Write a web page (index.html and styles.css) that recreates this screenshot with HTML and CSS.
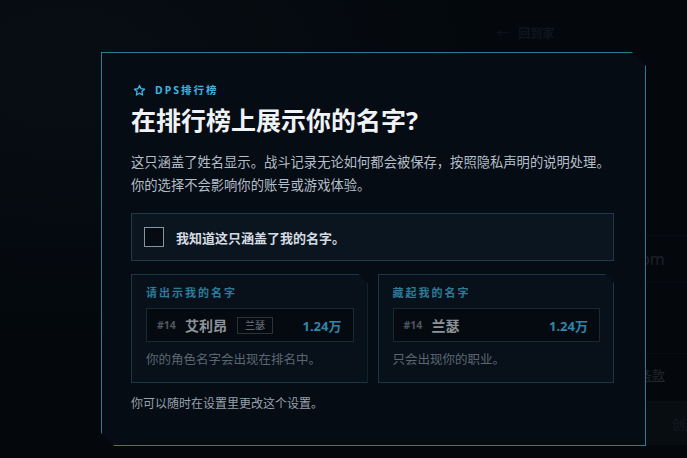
FILE: index.html
```html
<!doctype html>
<html lang="zh-CN">
<head>
    <meta charset="utf-8">
    <title>DPS排行榜</title>
    <link rel="stylesheet" href="styles.css">
</head>
<body>
    <!-- page underneath the dialog -->
    <div class="page">
        <a class="back-link" href="#"><span class="arrow">←</span> 回到家</a>
        <div class="field"><span class="field-value">player@example.com</span></div>
        <div class="rule"></div>
        <div class="terms"><span>我同意服务条款</span></div>
        <button class="create">创建</button>
    </div>

    <div class="overlay">
        <section class="dialog">
            <div class="eyebrow">
                <svg class="star" viewBox="0 0 24 24" width="13" height="13">
                    <path d="M12 2.8l2.8 6 6.5.7-4.9 4.4 1.4 6.4L12 17l-5.8 3.3 1.4-6.4-4.9-4.4 6.5-.7z" fill="none" stroke="currentColor" stroke-width="2.4" stroke-linejoin="round"/>
                </svg>
                <span>DPS排行榜</span>
            </div>
            <h1 class="title">在排行榜上展示你的名字?</h1>
            <p class="lead">这只涵盖了姓名显示。战斗记录无论如何都会被保存，按照隐私声明的说明处理。你的选择不会影响你的账号或游戏体验。</p>

            <label class="ack">
                <span class="box"></span>
                <span class="ack-text">我知道这只涵盖了我的名字。</span>
            </label>

            <div class="choices">
                <div class="choice">
                    <div class="choice-label">请出示我的名字</div>
                    <div class="preview">
                        <span class="rank">#14</span>
                        <span class="name">艾利昂</span>
                        <span class="tag">兰瑟</span>
                        <span class="dps">1.24万</span>
                    </div>
                    <p class="choice-desc">你的角色名字会出现在排名中。</p>
                </div>
                <div class="choice">
                    <div class="choice-label">藏起我的名字</div>
                    <div class="preview">
                        <span class="rank">#14</span>
                        <span class="name">兰瑟</span>
                        <span class="dps">1.24万</span>
                    </div>
                    <p class="choice-desc">只会出现你的职业。</p>
                </div>
            </div>

            <p class="footnote">你可以随时在设置里更改这个设置。</p>
        </section>
    </div>
</body>
</html>
```

FILE: styles.css
```css
:root {
    --accent: #3db5e2;
    --accent-dim: #2b7c99;
    --frame: #2b7b96;
    --cjk: "Noto Sans", "Noto Sans CJK SC", sans-serif;
}

html, body {
    margin: 0;
    height: 100%;
    overflow: hidden;
}
body {
    position: relative;
    background: radial-gradient(ellipse at 10% 15%, #0b121a 0%, #05090e 55%) #04080d;
    font-family: var(--cjk);
    color: #b4bec8;
}
p, h1 {
    margin: 0;
}

/* background page */
.page {
    display: flex;
    flex-direction: column;
    padding: 26px 0 0 497px;
    width: 400px;
}
.back-link {
    color: #171e26;
    font-size: 12px;
    font-weight: 700;
    text-decoration: none;
    line-height: 16px;
}
.back-link .arrow {
    font-weight: 400;
    margin-right: 6px;
}
.field {
    margin-top: 193px;
    height: 46px;
    border-top: 1px solid #0a1017;
    border-bottom: 1px solid #0a1017;
    display: flex;
    align-items: center;
}
.field-value {
    color: #2a3038;
    font-size: 16px;
    margin-left: 6px;
}
.rule {
    margin-top: 70px;
    height: 1px;
    background: #0b1118;
}
.terms {
    margin-top: 12px;
    font-size: 13px;
    line-height: 18px;
    color: #30363d;
    text-decoration: underline;
    padding-left: 77px;
}
.create {
    margin-top: 17px;
    width: 190px;
    height: 44px;
    border: none;
    background: #0b1117;
    color: #1f262e;
    font-family: var(--cjk);
    font-size: 13px;
    text-align: left;
    padding-left: 175px;
    white-space: nowrap;
    overflow: hidden;
}

/* dialog */
.overlay {
    position: absolute;
    inset: 0;
    background: rgba(2, 5, 9, 0.35);
}
.dialog {
    position: absolute;
    left: 101px;
    top: 52px;
    width: 545px;
    height: 394px;
    box-sizing: border-box;
    border: 1px solid var(--frame);
    background: #060c14;
    padding: 30px 31px 0 29px;
    clip-path: polygon(0 0, calc(100% - 14px) 0, 100% 14px, 100% 100%, 13px 100%, 0 calc(100% - 13px));
    display: flex;
    flex-direction: column;
}

.eyebrow {
    display: flex;
    align-items: center;
    gap: 9px;
    color: var(--accent);
    font-size: 10.5px;
    font-weight: 700;
    letter-spacing: 2px;
    line-height: 14px;
    padding-left: 2px;
}
.star {
    display: block;
}
.title {
    margin-top: 7px;
    font-size: 25px;
    font-weight: 700;
    line-height: 32px;
    color: #f0f3f5;
}
.lead {
    margin-top: 15px;
    font-size: 13.3px;
    line-height: 23px;
    color: #b4bec8;
}

.ack {
    margin-top: 16px;
    height: 48px;
    box-sizing: border-box;
    border: 1px solid #1c3a4b;
    background: #0a1520;
    display: flex;
    align-items: center;
    gap: 12px;
    padding-left: 12px;
}
.box {
    width: 20px;
    height: 20px;
    box-sizing: border-box;
    border: 1.5px solid #8795a0;
    background: #060b11;
}
.ack-text {
    font-size: 13px;
    font-weight: 700;
    color: #d5dbe0;
}

.choices {
    margin-top: 13px;
    display: grid;
    grid-template-columns: 1fr 1fr;
    gap: 10px;
}
.choice {
    border: 1px solid #18384a;
    background: #08111a;
    padding: 10px 13px 13px 14px;
    clip-path: polygon(0 0, calc(100% - 9px) 0, 100% 9px, 100% 100%, 0 100%);
}
.choice-label {
    font-size: 11px;
    font-weight: 700;
    letter-spacing: 2px;
    line-height: 16px;
    color: var(--accent-dim);
}
.preview {
    margin-top: 7px;
    height: 34px;
    box-sizing: border-box;
    border: 1px solid #1a2833;
    background: #050a10;
    display: flex;
    align-items: center;
    padding: 0 11px 0 10px;
}
.rank {
    font-size: 10.5px;
    font-weight: 700;
    color: #4d5661;
    width: 28px;
}
.name {
    font-size: 14px;
    font-weight: 700;
    color: #8d939a;
}
.tag {
    margin-left: 10px;
    font-size: 10px;
    line-height: 15px;
    padding: 0 7px;
    border: 1px solid #2a333d;
    color: #6f7780;
}
.dps {
    margin-left: auto;
    font-size: 13px;
    font-weight: 700;
    color: #2f86a6;
}
.choice-desc {
    margin-top: 9px;
    font-size: 12.5px;
    line-height: 18px;
    color: #5b6671;
}

.footnote {
    margin-top: 12px;
    font-size: 12px;
    line-height: 18px;
    color: #97a1ab;
}
```
